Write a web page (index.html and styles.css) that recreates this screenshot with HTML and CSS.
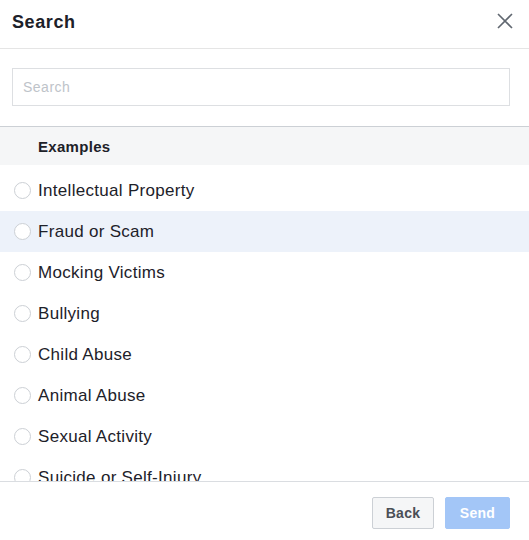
FILE: index.html
```html
<!DOCTYPE html>
<html>
<head>
<meta charset="utf-8">
<link rel="stylesheet" href="styles.css">
</head>
<body>
<div class="dialog">
  <div class="header">
    <div class="title">Search</div>
    <svg class="close" width="16" height="16" viewBox="0 0 16 16"><path d="M1 1 L15 15 M15 1 L1 15" stroke="#606770" stroke-width="1.6" fill="none"/></svg>
  </div>
  <div class="search-area">
    <div class="input">Search</div>
  </div>
  <div class="list">
    <div class="section">Examples</div>
    <div class="items">
      <div class="row"><span class="radio"></span><span class="label">Intellectual Property</span></div>
      <div class="row active"><span class="radio"></span><span class="label">Fraud or Scam</span></div>
      <div class="row"><span class="radio"></span><span class="label">Mocking Victims</span></div>
      <div class="row"><span class="radio"></span><span class="label">Bullying</span></div>
      <div class="row"><span class="radio"></span><span class="label">Child Abuse</span></div>
      <div class="row"><span class="radio"></span><span class="label">Animal Abuse</span></div>
      <div class="row"><span class="radio"></span><span class="label">Sexual Activity</span></div>
      <div class="row"><span class="radio"></span><span class="label">Suicide or Self-Injury</span></div>
    </div>
  </div>
  <div class="footer">
    <div class="btn back">Back</div>
    <div class="btn send">Send</div>
  </div>
</div>
</body>
</html>
```
FILE: styles.css
```css
* { box-sizing: border-box; }
html, body { margin: 0; padding: 0; background: #fff; }
body { font-family: "Liberation Sans", Arial, sans-serif; color: #1d2129; }
.dialog { width: 529px; height: 540px; display: flex; flex-direction: column; }
.header { height: 49px; padding: 0 16px 0 12px; display: flex; align-items: center; justify-content: space-between; border-bottom: 1px solid #e5e5e5; flex: none; }
.title { font-size: 18px; font-weight: bold; color: #1d2129; margin-top: -4px; letter-spacing: 0.6px; }
.close { display: block; margin-top: -6px; }
.search-area { padding: 19px 19px 20px 12px; border-bottom: 1px solid #ccd0d5; flex: none; }
.input { height: 38px; border: 1px solid #dddfe2; padding: 0 10px; display: flex; align-items: center; font-size: 14px; letter-spacing: 0.5px; color: #bec3c9; }
.list { height: 354px; overflow: hidden; flex: none; }
.section { height: 38px; background: #f5f6f7; padding-left: 38px; display: flex; align-items: center; font-size: 15px; letter-spacing: 0.3px; font-weight: bold; color: #1d2129; }
.items { padding-top: 5px; }
.row { height: 41px; display: flex; align-items: center; padding-left: 14px; }
.row.active { background: #edf2fa; }
.radio { width: 17px; height: 17px; border: 1px solid #ccd0d5; border-radius: 50%; background: #fff; flex: none; margin-right: 7px; }
.label { font-size: 17px; letter-spacing: 0.3px; color: #1d2129; }
.footer { flex: 1; border-top: 1px solid #dadde1; display: flex; justify-content: flex-end; align-items: flex-start; padding: 15px 19px 0 0; gap: 11px; }
.btn { height: 32px; display: flex; align-items: center; justify-content: center; font-size: 14px; font-weight: bold; border-radius: 2px; letter-spacing: 0.3px; }
.back { width: 62px; background: #f5f6f7; border: 1px solid #ccd0d5; color: #4b4f56; }
.send { width: 65px; background: #a3c6f7; border: 1px solid #a3c6f7; color: #fff; }
```
